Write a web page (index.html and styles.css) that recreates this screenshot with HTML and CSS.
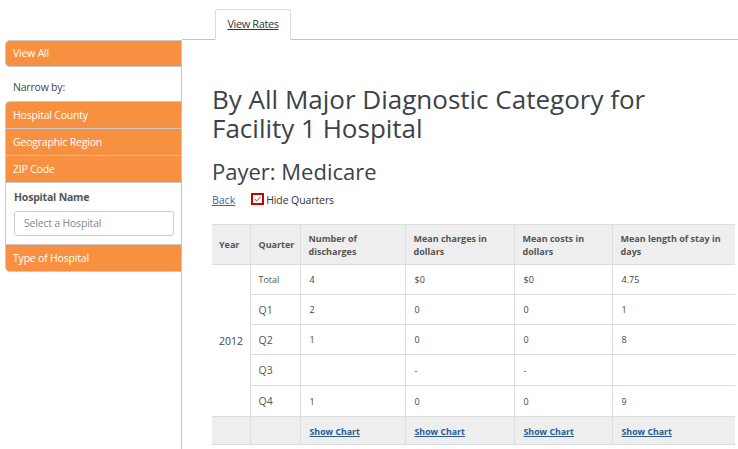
FILE: index.html
```html
<!DOCTYPE html>
<html>
<head>
<meta charset="utf-8">
<link rel="stylesheet" href="styles.css">
</head>
<body>
<div class="page">
  <aside class="sidebar">
    <div class="side-btn first">View All</div>
    <div class="narrow">Narrow by:</div>
    <div class="side-group">
      <div class="side-btn top">Hospital County</div>
      <div class="side-btn">Geographic Region</div>
      <div class="side-btn">ZIP Code</div>
      <div class="hosp">
        <div class="hosp-label">Hospital Name</div>
        <div class="hosp-input">Select a Hospital</div>
      </div>
      <div class="side-btn last">Type of Hospital</div>
    </div>
  </aside>
  <main class="main">
    <div class="tabs"><div class="tab"><span>View Rates</span></div></div>
    <div class="content">
      <h1 class="title">By All Major Diagnostic Category for Facility 1 Hospital</h1>
      <h2 class="payer">Payer: Medicare</h2>
      <div class="controls">
        <a class="back" href="#">Back</a>
        <span class="check"><span class="box"><svg width="10" height="10" viewBox="0 0 10 10"><path d="M2 5.2 L4.2 7.3 L8.3 2.6" fill="none" stroke="#888" stroke-width="1.2"/></svg></span>Hide Quarters</span>
      </div>
      <table class="rates">
        <colgroup>
          <col class="c-year"><col class="c-q"><col class="c-n"><col class="c-ch"><col class="c-co"><col class="c-len">
        </colgroup>
        <thead>
          <tr>
            <th>Year</th>
            <th>Quarter</th>
            <th>Number of discharges</th>
            <th>Mean charges in dollars</th>
            <th>Mean costs in dollars</th>
            <th>Mean length of stay in days</th>
          </tr>
        </thead>
        <tbody>
          <tr class="r-total"><td class="year" rowspan="5">2012</td><td class="q small">Total</td><td>4</td><td>$0</td><td>$0</td><td>4.75</td></tr>
          <tr><td class="q">Q1</td><td>2</td><td>0</td><td>0</td><td>1</td></tr>
          <tr><td class="q">Q2</td><td>1</td><td>0</td><td>0</td><td>8</td></tr>
          <tr class="tall"><td class="q">Q3</td><td></td><td>-</td><td>-</td><td></td></tr>
          <tr class="tall"><td class="q">Q4</td><td>1</td><td>0</td><td>0</td><td>9</td></tr>
        </tbody>
        <tfoot>
          <tr><td></td><td></td><td><a href="#">Show Chart</a></td><td><a href="#">Show Chart</a></td><td><a href="#">Show Chart</a></td><td><a href="#">Show Chart</a></td></tr>
        </tfoot>
      </table>
      <div class="after">Foot Source</div>
    </div>
  </main>
</div>
</body>
</html>
```
FILE: styles.css
```css
* { box-sizing: border-box; }
html, body { margin: 0; padding: 0; background: #fff; }
body {
  font-family: "Open Sans", "Liberation Sans", sans-serif;
  color: #444;
  width: 738px;
  height: 449px;
  overflow: hidden;
}
.page {
  display: flex;
  align-items: flex-start;
}
.sidebar {
  width: 182px;
  flex: none;
  margin-top: 40px;
  padding-left: 5px;
  border-right: 1px solid #c4c4c4;
  min-height: 409px;
}
.side-btn {
  background: #f79141;
  color: #fff;
  font-size: 10.5px;
  height: 27px;
  line-height: 26px;
  padding-left: 7px;
  border-bottom: 1px solid #c8c8c8;
  letter-spacing: -0.2px;
}
.side-btn.first {
  border: 1px solid #c8c8c8;
  border-right: none;
  border-radius: 5px 0 0 5px;
  height: 27px;
  line-height: 25px;
  padding-left: 7px;
}
.narrow {
  font-size: 10.5px;
  color: #444;
  height: 34px;
  line-height: 40px;
  padding-left: 8px;
  letter-spacing: -0.2px;
}
.side-group {
  border-left: 1px solid #c8c8c8;
  border-radius: 5px 0 0 5px;
  overflow: hidden;
  border-top: 1px solid #c8c8c8;
}
.side-group .side-btn { padding-left: 7px; }
.hosp {
  padding: 7px 7px 7px 8px;
  height: 62px;
  border-bottom: 1px solid #c8c8c8;
}
.hosp-label {
  font-size: 10.5px;
  font-weight: 700;
  color: #555;
  line-height: 15px;
  letter-spacing: -0.2px;
}
.hosp-input {
  margin-top: 6px;
  width: 160px;
  height: 25px;
  border: 1px solid #ccc;
  border-radius: 3px;
  font-size: 10.5px;
  color: #888;
  line-height: 23px;
  padding-left: 9px;
  letter-spacing: -0.2px;
}
.main {
  flex: 1;
  min-width: 0;
}
.tabs {
  height: 40px;
  border-bottom: 1px solid #c4c4c4;
  padding-left: 33px;
  padding-top: 9px;
  display: flex;
}
.tab {
  width: 76px;
  height: 31px;
  border: 1px solid #ddd;
  border-bottom: 1px solid #fff;
  border-radius: 3px 3px 0 0;
  background: #fff;
  font-size: 11px;
  color: #333;
  text-align: center;
  line-height: 28px;
  letter-spacing: -0.4px;
}
.tab span { text-decoration: underline; }
.content {
  padding-left: 30px;
}
.title {
  margin: 45px 0 0 0;
  max-width: 470px;
  font-size: 26px;
  font-weight: 400;
  line-height: 29px;
  color: #3c424a;
}
.payer {
  margin: 13px 0 0 0;
  font-size: 22px;
  font-weight: 400;
  line-height: 30px;
  color: #3c424a;
}
.controls {
  margin-top: 6px;
  display: flex;
  align-items: center;
  font-size: 10.5px;
  height: 16px;
}
.back {
  color: #2a6bae;
  text-decoration: underline;
  margin-right: 16px;
}
.check { display: flex; align-items: center; color: #333; letter-spacing: -0.1px; }
.box {
  width: 13px;
  height: 12px;
  border: 2px solid #c00;
  display: inline-flex;
  align-items: center;
  justify-content: center;
  margin-right: 2px;
  margin-top: -3px;
}
.box svg { display: block; }
.rates {
  margin-top: 16px;
  border-collapse: collapse;
  table-layout: fixed;
  width: 523px;
  font-size: 9px;
}
.c-year { width: 38px; }
.c-q { width: 50px; }
.c-n { width: 105px; }
.c-ch { width: 109px; }
.c-co { width: 98px; }
.c-len { width: 123px; }
.rates th, .rates td {
  border: 1px solid #ddd;
  text-align: left;
  vertical-align: middle;
  padding: 0 8px;
}
.rates tr > :first-child { border-left: none; }
.rates tr > :last-child { border-right: none; }
.rates thead th {
  background: #eee;
  height: 40px;
  font-weight: 700;
  color: #555;
  line-height: 13px;
  border-top: 1px solid #ddd;
}
.rates thead th:first-child { padding-left: 7px; }
.rates tbody td { height: 30px; color: #444; padding-left: 9px; }
.rates tbody tr.tall td { height: 31px; }
.rates tbody td.q { font-size: 10.5px; color: #555; padding-left: 8px; }
.rates tbody td.q.small { font-size: 9px; }
.rates tbody td.year { font-size: 10.5px; color: #444; padding-left: 7px; border-left: none; }
.rates tfoot td {
  background: #eee;
  height: 28px;
  padding-top: 2px;
  padding-left: 9px;
}
.rates tfoot a {
  color: #2a5d96;
  font-weight: 700;
  text-decoration: underline;
  font-size: 8.8px;
}
.after {
  font-size: 11px;
  line-height: 14px;
  color: #555;
  margin-top: 1px;
}
```
